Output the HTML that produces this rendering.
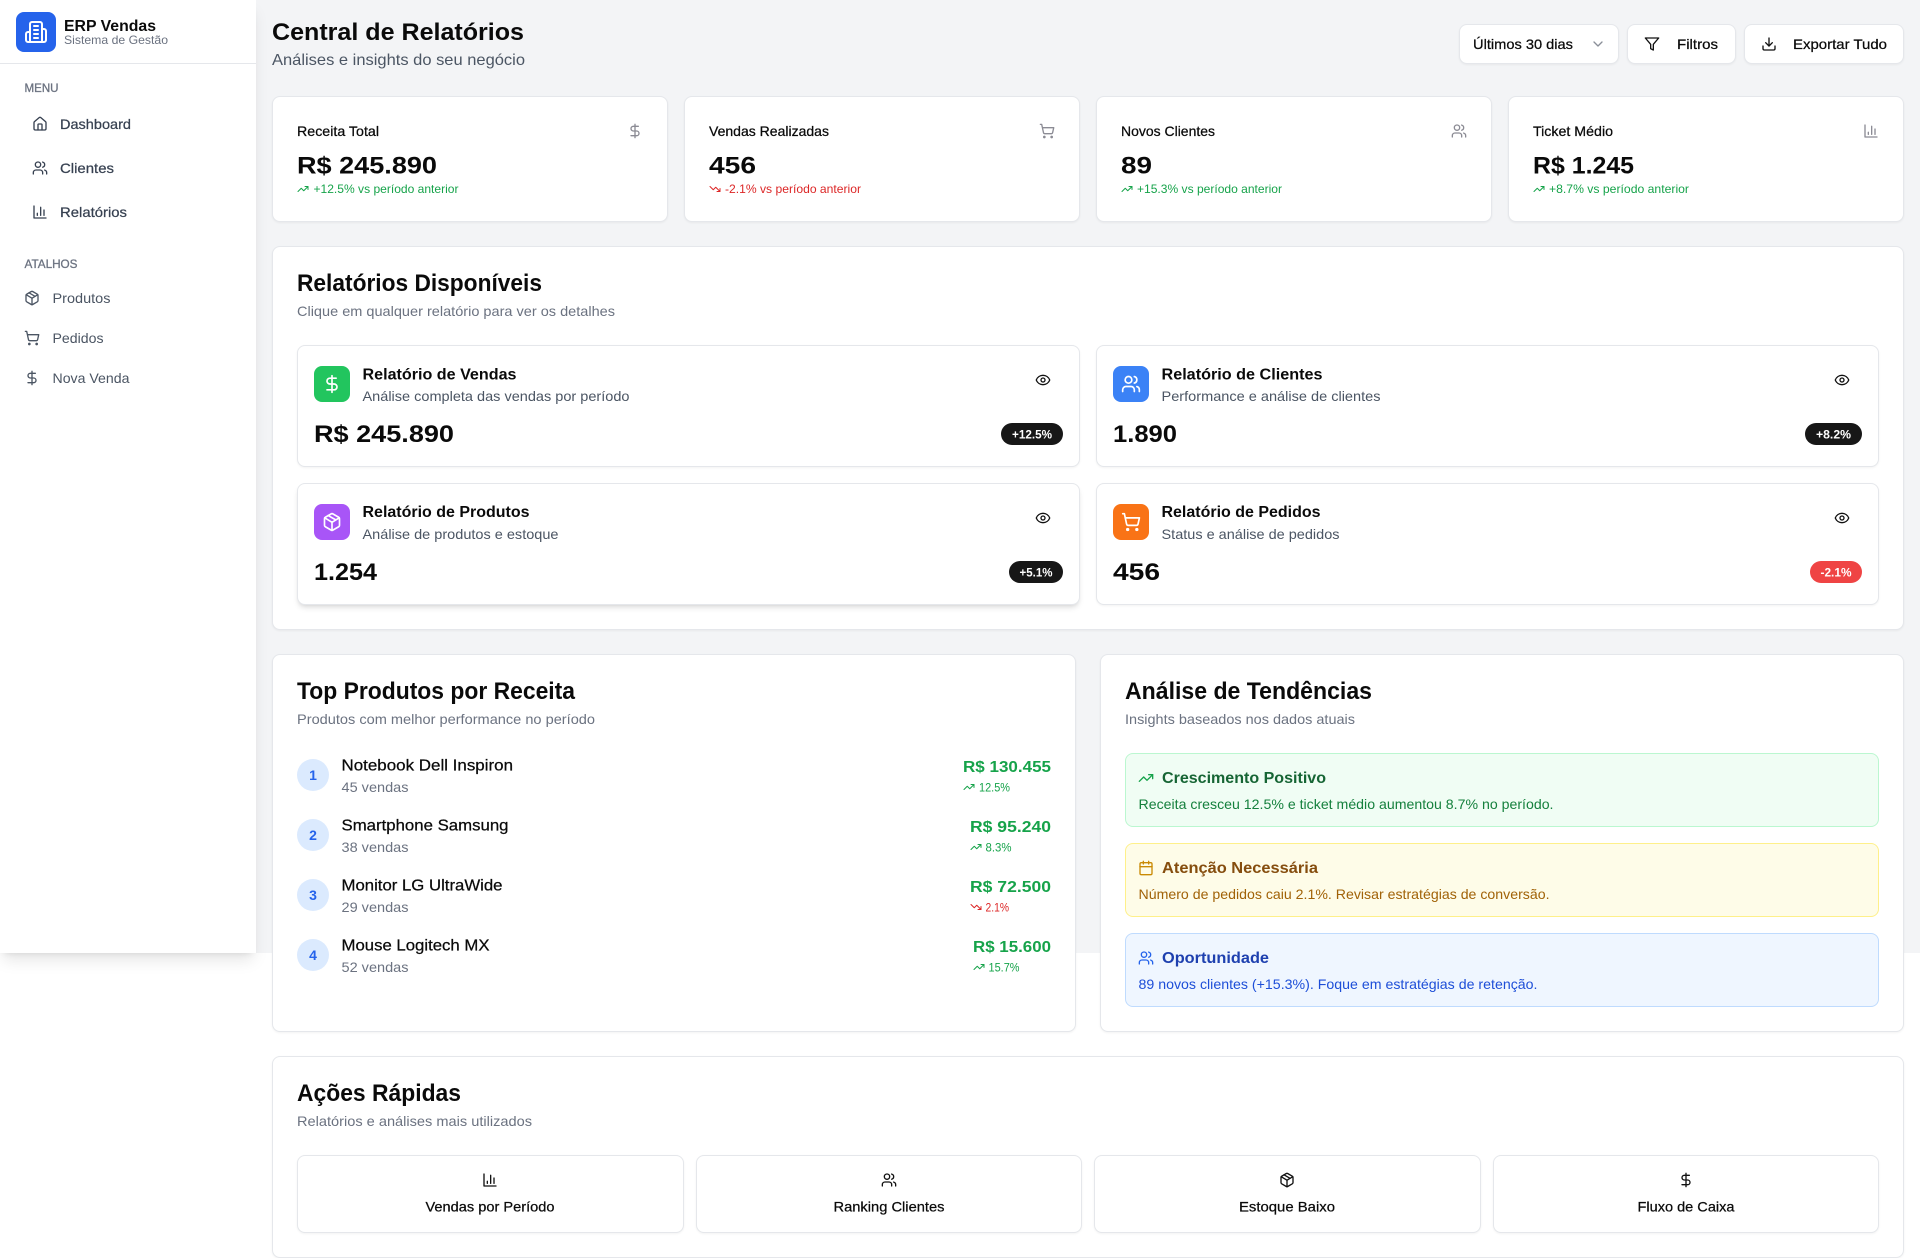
<!DOCTYPE html>
<html lang="pt-BR">
<head>
<meta charset="utf-8">
<title>Central de Relatórios</title>
<style>
*{box-sizing:border-box}
html,body{margin:0;padding:0;background:#fff}
body{position:relative;width:1920px;height:1258px;overflow:hidden;font-family:"Liberation Sans",sans-serif}
#bg{position:absolute;left:0;top:0;width:1920px;height:953px;background:#f3f4f6}
.sb{position:absolute;left:0;top:0;width:256px;height:953px;background:#fff;box-shadow:0 10px 15px -3px rgba(0,0,0,.1),0 4px 6px -4px rgba(0,0,0,.1)}
.ln{position:absolute;left:0;top:63px;width:256px;height:1px;background:#e5e7eb}
.c{position:absolute;background:#fff;border:1px solid #e5e7eb;border-radius:8px;box-shadow:0 1px 2px rgba(0,0,0,.05)}
.r{position:absolute;border-radius:8px}
.p{position:absolute;border-radius:11px;height:22px}
.i{position:absolute;border-radius:8px;border:1px solid}
.n{position:absolute;width:32px;height:32px;border-radius:50%;background:#dbeafe}
svg#o{position:absolute;left:0;top:0}
text{font-family:"Liberation Sans",sans-serif}
.s12{font-size:12px}.s14{font-size:14px}.s16{font-size:16px}.s24{font-size:24px}
.b{font-weight:700}
.k{fill:#0a0a0a}.g{fill:#6b7280}.h{fill:#4b5563}.d{fill:#374151}.u{fill:#16a34a}.e{fill:#dc2626}.w{fill:#fff}
.s14.k,.s16.k:not(.b){stroke:#0a0a0a;stroke-width:.25px}
.s14.d{stroke:#374151;stroke-width:.25px}
.m{stroke:#6b7280;stroke-width:.3px}
.ic{fill:none;stroke-width:2;stroke-linecap:round;stroke-linejoin:round}
</style>
</head>
<body>
<div id="bg"></div>
<div class="sb"><div class="ln"></div></div>
<div class="r" style="left:16px;top:12px;width:40px;height:40px;background:#2563eb"></div>

<div class="c" style="left:1459px;top:24px;width:160px;height:40px"></div>
<div class="c" style="left:1627px;top:24px;width:109px;height:40px"></div>
<div class="c" style="left:1744px;top:24px;width:160px;height:40px"></div>

<div class="c" style="left:272px;top:96px;width:396px;height:126px"></div>
<div class="c" style="left:684px;top:96px;width:396px;height:126px"></div>
<div class="c" style="left:1096px;top:96px;width:396px;height:126px"></div>
<div class="c" style="left:1508px;top:96px;width:396px;height:126px"></div>

<div class="c" style="left:272px;top:246px;width:1632px;height:384px"></div>
<div class="c" style="left:297px;top:345px;width:783px;height:122px"></div>
<div class="c" style="left:1096px;top:345px;width:783px;height:122px"></div>
<div class="c" style="left:297px;top:483px;width:783px;height:122px;box-shadow:0 4px 6px -1px rgba(0,0,0,.1),0 2px 4px -2px rgba(0,0,0,.1)"></div>
<div class="c" style="left:1096px;top:483px;width:783px;height:122px"></div>
<div class="r" style="left:314px;top:366px;width:36px;height:36px;background:#22c55e"></div>
<div class="r" style="left:1113px;top:366px;width:36px;height:36px;background:#3b82f6"></div>
<div class="r" style="left:314px;top:504px;width:36px;height:36px;background:#a855f7"></div>
<div class="r" style="left:1113px;top:504px;width:36px;height:36px;background:#f97316"></div>
<div class="p" style="left:1001px;top:423px;width:62px;background:#171717"></div>
<div class="p" style="left:1805px;top:423px;width:57px;background:#171717"></div>
<div class="p" style="left:1009px;top:561px;width:54px;background:#171717"></div>
<div class="p" style="left:1810px;top:561px;width:52px;background:#ef4444"></div>

<div class="c" style="left:272px;top:654px;width:804px;height:378px"></div>
<div class="c" style="left:1100px;top:654px;width:804px;height:378px"></div>
<div class="n" style="left:297px;top:759px"></div>
<div class="n" style="left:297px;top:819px"></div>
<div class="n" style="left:297px;top:879px"></div>
<div class="n" style="left:297px;top:939px"></div>
<div class="i" style="left:1125px;top:753px;width:754px;height:74px;background:#f0fdf4;border-color:#bbf7d0"></div>
<div class="i" style="left:1125px;top:843px;width:754px;height:74px;background:#fefce8;border-color:#fef08a"></div>
<div class="i" style="left:1125px;top:933px;width:754px;height:74px;background:#eff6ff;border-color:#bfdbfe"></div>

<div class="c" style="left:272px;top:1056px;width:1632px;height:202px"></div>
<div class="c" style="left:297px;top:1155px;width:387px;height:78px"></div>
<div class="c" style="left:696px;top:1155px;width:386px;height:78px"></div>
<div class="c" style="left:1094px;top:1155px;width:387px;height:78px"></div>
<div class="c" style="left:1493px;top:1155px;width:386px;height:78px"></div>

<svg id="o" width="1920" height="1258" viewBox="0 0 1920 1258" xmlns="http://www.w3.org/2000/svg">
<defs>
<symbol id="dol" viewBox="0 0 24 24"><path d="M12 2v20"/><path d="M17 5H9.5a3.5 3.5 0 0 0 0 7h5a3.5 3.5 0 0 1 0 7H6"/></symbol>
<symbol id="cart" viewBox="0 0 24 24"><circle cx="8" cy="21" r="1"/><circle cx="19" cy="21" r="1"/><path d="M2.05 2.05h2l2.66 12.42a2 2 0 0 0 2 1.58h9.78a2 2 0 0 0 1.95-1.57l1.65-7.43H5.12"/></symbol>
<symbol id="usr" viewBox="0 0 24 24"><path d="M16 21v-2a4 4 0 0 0-4-4H6a4 4 0 0 0-4 4v2"/><circle cx="9" cy="7" r="4"/><path d="M22 21v-2a4 4 0 0 0-3-3.87"/><path d="M16 3.13a4 4 0 0 1 0 7.75"/></symbol>
<symbol id="bar" viewBox="0 0 24 24"><path d="M3 3v18h18"/><path d="M18 17V9"/><path d="M13 17V5"/><path d="M8 17v-3"/></symbol>
<symbol id="pkg" viewBox="0 0 24 24"><path d="M11 21.73a2 2 0 0 0 2 0l7-4A2 2 0 0 0 21 16V8a2 2 0 0 0-1-1.73l-7-4a2 2 0 0 0-2 0l-7 4A2 2 0 0 0 3 8v8a2 2 0 0 0 1 1.73z"/><path d="M12 22V12"/><path d="m3.3 7 7.703 4.734a2 2 0 0 0 1.994 0L20.7 7"/><path d="m7.5 4.27 9 5.15"/></symbol>
<symbol id="home" viewBox="0 0 24 24"><path d="M15 21v-8a1 1 0 0 0-1-1h-4a1 1 0 0 0-1 1v8"/><path d="M3 10a2 2 0 0 1 .709-1.528l7-5.999a2 2 0 0 1 2.582 0l7 5.999A2 2 0 0 1 21 10v9a2 2 0 0 1-2 2H5a2 2 0 0 1-2-2z"/></symbol>
<symbol id="bld" viewBox="0 0 24 24"><path d="M6 22V4a2 2 0 0 1 2-2h8a2 2 0 0 1 2 2v18Z"/><path d="M6 12H4a2 2 0 0 0-2 2v6a2 2 0 0 0 2 2h2"/><path d="M18 9h2a2 2 0 0 1 2 2v9a2 2 0 0 1-2 2h-2"/><path d="M10 6h4"/><path d="M10 10h4"/><path d="M10 14h4"/><path d="M10 18h4"/></symbol>
<symbol id="up" viewBox="0 0 24 24"><polyline points="22 7 13.5 15.5 8.5 10.5 2 17"/><polyline points="16 7 22 7 22 13"/></symbol>
<symbol id="dn" viewBox="0 0 24 24"><polyline points="22 17 13.5 8.5 8.5 13.5 2 7"/><polyline points="16 17 22 17 22 11"/></symbol>
<symbol id="eye" viewBox="0 0 24 24"><path d="M2.062 12.348a1 1 0 0 1 0-.696 10.75 10.75 0 0 1 19.876 0 1 1 0 0 1 0 .696 10.75 10.75 0 0 1-19.876 0"/><circle cx="12" cy="12" r="3"/></symbol>
<symbol id="flt" viewBox="0 0 24 24"><polygon points="22 3 2 3 10 12.46 10 19 14 21 14 12.46 22 3"/></symbol>
<symbol id="dl" viewBox="0 0 24 24"><path d="M21 15v4a2 2 0 0 1-2 2H5a2 2 0 0 1-2-2v-4"/><polyline points="7 10 12 15 17 10"/><path d="M12 15V3"/></symbol>
<symbol id="chv" viewBox="0 0 24 24"><path d="m6 9 6 6 6-6"/></symbol>
<symbol id="cal" viewBox="0 0 24 24"><path d="M8 2v4"/><path d="M16 2v4"/><rect x="3" y="4" width="18" height="18" rx="2"/><path d="M3 10h18"/></symbol>
</defs>

<!-- icons -->
<g class="ic">
<use href="#bld" x="24" y="20" width="24" height="24" stroke="#fff"/>
<g stroke="#374151">
<use href="#home" x="32" y="116" width="16" height="16"/>
<use href="#usr" x="32" y="160" width="16" height="16"/>
<use href="#bar" x="32" y="204" width="16" height="16"/>
</g>
<g stroke="#4b5563">
<use href="#pkg" x="24" y="290" width="16" height="16"/>
<use href="#cart" x="24" y="330" width="16" height="16"/>
<use href="#dol" x="24" y="370" width="16" height="16"/>
</g>
<use href="#chv" x="1590" y="36" width="16" height="16" stroke="#8a8f98"/>
<use href="#flt" x="1644" y="36" width="16" height="16" stroke="#111"/>
<use href="#dl" x="1761" y="36" width="16" height="16" stroke="#111"/>
<g stroke="#8b8b94">
<use href="#dol" x="627" y="123" width="16" height="16"/>
<use href="#cart" x="1039" y="123" width="16" height="16"/>
<use href="#usr" x="1451" y="123" width="16" height="16"/>
<use href="#bar" x="1863" y="123" width="16" height="16"/>
</g>
<g stroke="#16a34a">
<use href="#up" x="297" y="183" width="12" height="12"/>
<use href="#up" x="1121" y="183" width="12" height="12"/>
<use href="#up" x="1533" y="183" width="12" height="12"/>
<use href="#up" x="963" y="781" width="12" height="12"/>
<use href="#up" x="970" y="841" width="12" height="12"/>
<use href="#up" x="973" y="961" width="12" height="12"/>
<use href="#up" x="1138" y="770" width="16" height="16"/>
</g>
<g stroke="#dc2626">
<use href="#dn" x="709" y="183" width="12" height="12"/>
<use href="#dn" x="970" y="901" width="12" height="12"/>
</g>
<g stroke="#fff">
<use href="#dol" x="322" y="374" width="20" height="20"/>
<use href="#usr" x="1121" y="374" width="20" height="20"/>
<use href="#pkg" x="322" y="512" width="20" height="20"/>
<use href="#cart" x="1121" y="512" width="20" height="20"/>
</g>
<g stroke="#111">
<use href="#eye" x="1035" y="372" width="16" height="16"/>
<use href="#eye" x="1834" y="372" width="16" height="16"/>
<use href="#eye" x="1035" y="510" width="16" height="16"/>
<use href="#eye" x="1834" y="510" width="16" height="16"/>
<use href="#bar" x="482" y="1172" width="16" height="16"/>
<use href="#usr" x="881" y="1172" width="16" height="16"/>
<use href="#pkg" x="1279" y="1172" width="16" height="16"/>
<use href="#dol" x="1678" y="1172" width="16" height="16"/>
</g>
<use href="#cal" x="1138" y="860" width="16" height="16" stroke="#ca8a04"/>
<use href="#usr" x="1138" y="950" width="16" height="16" stroke="#2563eb"/>
</g>

<!-- sidebar text -->
<text x="64" y="31" class="s16 b k" textLength="92" lengthAdjust="spacingAndGlyphs">ERP Vendas</text>
<text x="64" y="44" class="s12 g" textLength="104" lengthAdjust="spacingAndGlyphs">Sistema de Gestão</text>
<text x="24.5" y="92" class="s12 g m" textLength="34" lengthAdjust="spacingAndGlyphs">MENU</text>
<text x="60" y="129" class="s14 d" textLength="71" lengthAdjust="spacingAndGlyphs">Dashboard</text>
<text x="60" y="173" class="s14 d" textLength="54" lengthAdjust="spacingAndGlyphs">Clientes</text>
<text x="60" y="217" class="s14 d" textLength="67" lengthAdjust="spacingAndGlyphs">Relatórios</text>
<text x="24.5" y="268" class="s12 g m" textLength="53" lengthAdjust="spacingAndGlyphs">ATALHOS</text>
<text x="52.5" y="303" class="s14 h" textLength="58" lengthAdjust="spacingAndGlyphs">Produtos</text>
<text x="52.5" y="343" class="s14 h" textLength="51" lengthAdjust="spacingAndGlyphs">Pedidos</text>
<text x="52.5" y="383" class="s14 h" textLength="77" lengthAdjust="spacingAndGlyphs">Nova Venda</text>

<!-- header -->
<text x="272" y="40" class="s24 b k" textLength="252" lengthAdjust="spacingAndGlyphs">Central de Relatórios</text>
<text x="272" y="65" class="s16 h" textLength="253" lengthAdjust="spacingAndGlyphs">Análises e insights do seu negócio</text>
<text x="1473" y="49" class="s14 k" textLength="100" lengthAdjust="spacingAndGlyphs">Últimos 30 dias</text>
<text x="1677" y="49" class="s14 k" textLength="41" lengthAdjust="spacingAndGlyphs">Filtros</text>
<text x="1793" y="49" class="s14 k" textLength="94" lengthAdjust="spacingAndGlyphs">Exportar Tudo</text>

<!-- stats -->
<text x="297" y="136" class="s14 k" textLength="82" lengthAdjust="spacingAndGlyphs">Receita Total</text>
<text x="709" y="136" class="s14 k" textLength="120" lengthAdjust="spacingAndGlyphs">Vendas Realizadas</text>
<text x="1121" y="136" class="s14 k" textLength="94" lengthAdjust="spacingAndGlyphs">Novos Clientes</text>
<text x="1533" y="136" class="s14 k" textLength="80" lengthAdjust="spacingAndGlyphs">Ticket Médio</text>
<text x="297" y="173.5" class="s24 b k" textLength="140" lengthAdjust="spacingAndGlyphs">R$ 245.890</text>
<text x="709" y="173.5" class="s24 b k" textLength="47" lengthAdjust="spacingAndGlyphs">456</text>
<text x="1121" y="173.5" class="s24 b k" textLength="31" lengthAdjust="spacingAndGlyphs">89</text>
<text x="1533" y="173.5" class="s24 b k" textLength="101" lengthAdjust="spacingAndGlyphs">R$ 1.245</text>
<text x="313.5" y="193" class="s12 u" textLength="145" lengthAdjust="spacingAndGlyphs">+12.5% vs período anterior</text>
<text x="725" y="193" class="s12 e" textLength="136" lengthAdjust="spacingAndGlyphs">-2.1% vs período anterior</text>
<text x="1137" y="193" class="s12 u" textLength="145" lengthAdjust="spacingAndGlyphs">+15.3% vs período anterior</text>
<text x="1549" y="193" class="s12 u" textLength="140" lengthAdjust="spacingAndGlyphs">+8.7% vs período anterior</text>

<!-- reports -->
<text x="297" y="291" class="s24 b k" textLength="245" lengthAdjust="spacingAndGlyphs">Relatórios Disponíveis</text>
<text x="297" y="316" class="s14 g" textLength="318" lengthAdjust="spacingAndGlyphs">Clique em qualquer relatório para ver os detalhes</text>

<text x="362.5" y="379.3" class="s16 b k" textLength="154" lengthAdjust="spacingAndGlyphs">Relatório de Vendas</text>
<text x="362.5" y="401" class="s14 h" textLength="267" lengthAdjust="spacingAndGlyphs">Análise completa das vendas por período</text>
<text x="314" y="442" class="s24 b k" textLength="140" lengthAdjust="spacingAndGlyphs">R$ 245.890</text>
<text x="1012" y="438.3" class="s12 b w" textLength="40" lengthAdjust="spacingAndGlyphs">+12.5%</text>

<text x="1161.5" y="379.3" class="s16 b k" textLength="161" lengthAdjust="spacingAndGlyphs">Relatório de Clientes</text>
<text x="1161.5" y="401" class="s14 h" textLength="219" lengthAdjust="spacingAndGlyphs">Performance e análise de clientes</text>
<text x="1113" y="442" class="s24 b k" textLength="64" lengthAdjust="spacingAndGlyphs">1.890</text>
<text x="1816" y="438.3" class="s12 b w" textLength="35" lengthAdjust="spacingAndGlyphs">+8.2%</text>

<text x="362.5" y="517" class="s16 b k" textLength="167" lengthAdjust="spacingAndGlyphs">Relatório de Produtos</text>
<text x="362.5" y="539" class="s14 h" textLength="196" lengthAdjust="spacingAndGlyphs">Análise de produtos e estoque</text>
<text x="314" y="580" class="s24 b k" textLength="63" lengthAdjust="spacingAndGlyphs">1.254</text>
<text x="1019.5" y="576.3" class="s12 b w" textLength="33" lengthAdjust="spacingAndGlyphs">+5.1%</text>

<text x="1161.5" y="517" class="s16 b k" textLength="159" lengthAdjust="spacingAndGlyphs">Relatório de Pedidos</text>
<text x="1161.5" y="539" class="s14 h" textLength="178" lengthAdjust="spacingAndGlyphs">Status e análise de pedidos</text>
<text x="1113" y="580" class="s24 b k" textLength="47" lengthAdjust="spacingAndGlyphs">456</text>
<text x="1820.5" y="576.3" class="s12 b w" textLength="31" lengthAdjust="spacingAndGlyphs">-2.1%</text>

<!-- top produtos -->
<text x="297" y="699" class="s24 b k" textLength="278" lengthAdjust="spacingAndGlyphs">Top Produtos por Receita</text>
<text x="297" y="724" class="s14 g" textLength="298" lengthAdjust="spacingAndGlyphs">Produtos com melhor performance no período</text>

<g fill="#2563eb" text-anchor="middle">
<text x="313" y="780" class="s14 b">1</text>
<text x="313" y="840" class="s14 b">2</text>
<text x="313" y="900" class="s14 b">3</text>
<text x="313" y="960" class="s14 b">4</text>
</g>

<text x="341.5" y="770.5" class="s16 k" textLength="171.5" lengthAdjust="spacingAndGlyphs">Notebook Dell Inspiron</text>
<text x="341.5" y="792" class="s14 g" textLength="67" lengthAdjust="spacingAndGlyphs">45 vendas</text>
<text x="1051" y="772" class="s16 b u" text-anchor="end" textLength="88" lengthAdjust="spacingAndGlyphs">R$ 130.455</text>
<text x="979" y="791.3" class="s12 u" textLength="31" lengthAdjust="spacingAndGlyphs">12.5%</text>

<text x="341.5" y="830.5" class="s16 k" textLength="167" lengthAdjust="spacingAndGlyphs">Smartphone Samsung</text>
<text x="341.5" y="852" class="s14 g" textLength="67" lengthAdjust="spacingAndGlyphs">38 vendas</text>
<text x="1051" y="832" class="s16 b u" text-anchor="end" textLength="81" lengthAdjust="spacingAndGlyphs">R$ 95.240</text>
<text x="985.5" y="851.3" class="s12 u" textLength="26" lengthAdjust="spacingAndGlyphs">8.3%</text>

<text x="341.5" y="890.5" class="s16 k" textLength="161" lengthAdjust="spacingAndGlyphs">Monitor LG UltraWide</text>
<text x="341.5" y="912" class="s14 g" textLength="67" lengthAdjust="spacingAndGlyphs">29 vendas</text>
<text x="1051" y="892" class="s16 b u" text-anchor="end" textLength="81" lengthAdjust="spacingAndGlyphs">R$ 72.500</text>
<text x="985.5" y="911.3" class="s12 e" textLength="23.5" lengthAdjust="spacingAndGlyphs">2.1%</text>

<text x="341.5" y="950.5" class="s16 k" textLength="148" lengthAdjust="spacingAndGlyphs">Mouse Logitech MX</text>
<text x="341.5" y="972" class="s14 g" textLength="67" lengthAdjust="spacingAndGlyphs">52 vendas</text>
<text x="1051" y="952" class="s16 b u" text-anchor="end" textLength="78" lengthAdjust="spacingAndGlyphs">R$ 15.600</text>
<text x="988.5" y="971.3" class="s12 u" textLength="31" lengthAdjust="spacingAndGlyphs">15.7%</text>

<!-- tendencias -->
<text x="1125" y="699" class="s24 b k" textLength="247" lengthAdjust="spacingAndGlyphs">Análise de Tendências</text>
<text x="1125" y="724" class="s14 g" textLength="230" lengthAdjust="spacingAndGlyphs">Insights baseados nos dados atuais</text>

<text x="1162" y="783" class="s16 b" fill="#166534" textLength="164" lengthAdjust="spacingAndGlyphs">Crescimento Positivo</text>
<text x="1138.5" y="809" class="s14" fill="#15803d" textLength="415" lengthAdjust="spacingAndGlyphs">Receita cresceu 12.5% e ticket médio aumentou 8.7% no período.</text>
<text x="1162" y="873" class="s16 b" fill="#854d0e" textLength="156" lengthAdjust="spacingAndGlyphs">Atenção Necessária</text>
<text x="1138.5" y="899" class="s14" fill="#a16207" textLength="411" lengthAdjust="spacingAndGlyphs">Número de pedidos caiu 2.1%. Revisar estratégias de conversão.</text>
<text x="1162" y="963" class="s16 b" fill="#1e40af" textLength="107" lengthAdjust="spacingAndGlyphs">Oportunidade</text>
<text x="1138.5" y="989" class="s14" fill="#1d4ed8" textLength="399" lengthAdjust="spacingAndGlyphs">89 novos clientes (+15.3%). Foque em estratégias de retenção.</text>

<!-- acoes -->
<text x="297" y="1101" class="s24 b k" textLength="164" lengthAdjust="spacingAndGlyphs">Ações Rápidas</text>
<text x="297" y="1126" class="s14 g" textLength="235" lengthAdjust="spacingAndGlyphs">Relatórios e análises mais utilizados</text>
<text x="425.5" y="1211.5" class="s14 k" textLength="129" lengthAdjust="spacingAndGlyphs">Vendas por Período</text>
<text x="833.5" y="1211.5" class="s14 k" textLength="111" lengthAdjust="spacingAndGlyphs">Ranking Clientes</text>
<text x="1239" y="1211.5" class="s14 k" textLength="96" lengthAdjust="spacingAndGlyphs">Estoque Baixo</text>
<text x="1637.5" y="1211.5" class="s14 k" textLength="97" lengthAdjust="spacingAndGlyphs">Fluxo de Caixa</text>
</svg>
</body>
</html>
